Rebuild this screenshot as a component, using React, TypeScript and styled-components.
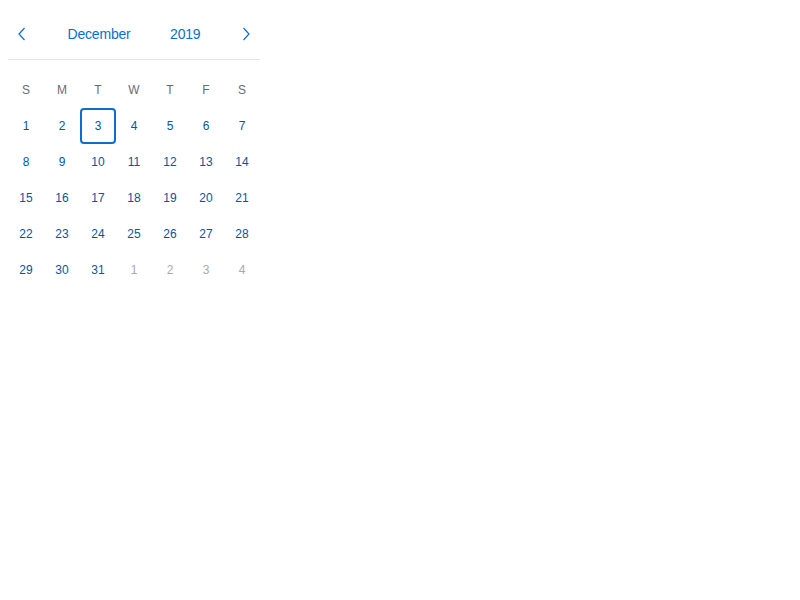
import React from 'react';
import styled, { createGlobalStyle } from 'styled-components';

const GlobalStyle = createGlobalStyle`
  body {
    margin: 8px;
    background: #ffffff;
    font-family: "Liberation Sans", Arial, sans-serif;
  }
`;

const Calendar = styled.div`
  width: 252px;
`;

const Header = styled.div`
  display: flex;
  align-items: center;
  justify-content: space-between;
  height: 51px;
  border-bottom: 1px solid #e5e5e5;
`;

const ArrowButton = styled.button`
  display: flex;
  align-items: center;
  justify-content: center;
  width: 28px;
  height: 36px;
  border: none;
  background: none;
  padding: 0;
  color: #0a6ed1;
`;

const HeaderButton = styled.button`
  border: none;
  background: none;
  padding: 0 8px;
  height: 36px;
  font-family: inherit;
  font-size: 14px;
  letter-spacing: -0.2px;
  color: #0a6ed1;
`;

const Grid = styled.div`
  display: grid;
  grid-template-columns: repeat(7, 36px);
  grid-auto-rows: 36px;
  padding-top: 12px;
`;

const DayName = styled.div`
  display: flex;
  align-items: center;
  justify-content: center;
  font-size: 12px;
  color: #6a6d70;
`;

const Day = styled.div<{ $other?: boolean; $focused?: boolean }>`
  display: flex;
  align-items: center;
  justify-content: center;
  box-sizing: border-box;
  font-size: 12px;
  color: ${(p) => (p.$other ? '#a9a9a9' : '#0854a0')};
  border: 2px solid ${(p) => (p.$focused ? '#0a6ed1' : 'transparent')};
  border-radius: 4px;
`;

const Chevron = ({ dir }: { dir: 'left' | 'right' }) => (
  <svg width="10" height="14" viewBox="0 0 10 14">
    <path
      d={dir === 'left' ? 'M7.5 1 L2 7 L7.5 13' : 'M2.5 1 L8 7 L2.5 13'}
      fill="none"
      stroke="currentColor"
      strokeWidth="1.2"
    />
  </svg>
);

export default function App() {
  const names = ['S', 'M', 'T', 'W', 'T', 'F', 'S'];
  const days: { n: number; other: boolean }[] = [];
  for (let i = 1; i <= 31; i++) days.push({ n: i, other: false });
  for (let i = 1; i <= 4; i++) days.push({ n: i, other: true });

  return (
    <>
      <GlobalStyle />
      <Calendar>
        <Header>
          <ArrowButton>
            <Chevron dir="left" />
          </ArrowButton>
          <HeaderButton>December</HeaderButton>
          <HeaderButton>2019</HeaderButton>
          <ArrowButton>
            <Chevron dir="right" />
          </ArrowButton>
        </Header>
        <Grid>
          {names.map((n, i) => (
            <DayName key={'n' + i}>{n}</DayName>
          ))}
          {days.map((d, i) => (
            <Day key={i} $other={d.other} $focused={!d.other && d.n === 3}>
              {d.n}
            </Day>
          ))}
        </Grid>
      </Calendar>
    </>
  );
}
